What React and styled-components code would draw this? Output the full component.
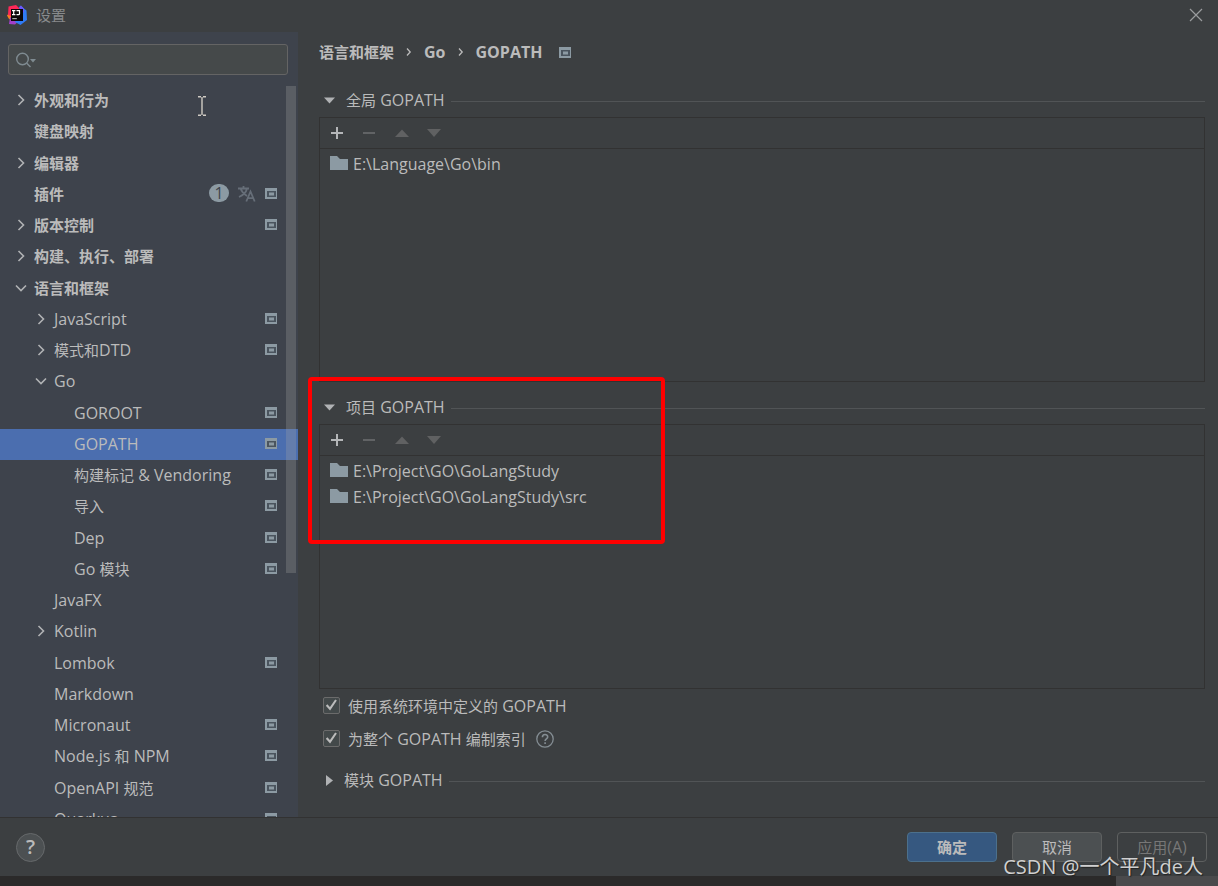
import React, { useState } from "react";
import styled, { createGlobalStyle, css } from "styled-components";

const fundo = "#3c3f41";
const fundoLateral = "#3e434c";
const texto = "#bbbbbb";
const icone = "#8c9aa3";
const borda = "#323232";
const azul = "#4b6eaf";

const GlobalStyle = createGlobalStyle`
	* {
		box-sizing: border-box;
	}

	body {
		margin: 0;
		background: ${fundo};
		color: ${texto};
		font-family: "Open Sans", "Noto Sans CJK SC", sans-serif;
		font-size: 16px;
		line-height: 20px;
	}

	button, input {
		font: inherit;
		color: inherit;
	}
`;

const Window = styled.div`
	position: relative;
	display: flex;
	flex-direction: column;
	height: 100vh;
	min-height: 600px;
	overflow: hidden;
`;

const TitleBar = styled.header`
	display: flex;
	align-items: center;
	height: 32px;
	padding: 0 15px 2px 7px;
	gap: 9px;
	color: #888a8c;
	flex-shrink: 0;
`;

const Title = styled.h1`
	flex: 1;
	margin: 0;
	font-size: 15px;
	font-weight: 400;
`;

const PlainButton = styled.button`
	display: flex;
	align-items: center;
	justify-content: center;
	padding: 0;
	border: 0;
	background: none;
`;

const Body = styled.div`
	display: flex;
	flex: 1;
	min-height: 0;
`;

const Sidebar = styled.aside`
	position: relative;
	display: flex;
	flex-direction: column;
	width: 298px;
	flex-shrink: 0;
	padding-top: 12px;
	background: ${fundoLateral};
`;

const SearchBox = styled.label`
	display: flex;
	align-items: center;
	height: 31px;
	margin: 0 10px 10px 8px;
	padding: 0 7px;
	background: #45494a;
	border: 1px solid #646464;
	border-radius: 3px;
`;

const SearchInput = styled.input`
	flex: 1;
	min-width: 0;
	border: 0;
	outline: 0;
	background: none;
`;

const TreeView = styled.div`
	position: relative;
	flex: 1;
	min-height: 0;
	overflow: hidden;
`;

const Tree = styled.ul`
	display: grid;
	grid-auto-rows: 1fr;
	height: 750px;
	margin: 0;
	padding: 0;
	list-style: none;
`;

const TreeRow = styled.li`
	display: flex;
	align-items: center;
	gap: 6px;
	padding: 0 21px 1px ${({ $level }) => 14 + $level * 20}px;
	font-weight: ${({ $level }) => ($level === 0 ? 700 : 400)};
	${({ $selected }) => $selected && css`
		background: ${azul};
	`}
`;

const TreeLabel = styled.span`
	flex: 1;
	white-space: nowrap;
`;

const Arrow = styled.span`
	display: flex;
	width: 14px;
`;

const Badge = styled.span`
	width: 20px;
	height: 18px;
	border-radius: 9px;
	background: ${icone};
	color: ${fundoLateral};
	font-weight: 400;
	line-height: 18px;
	text-align: center;
`;

const RowIcons = styled.span`
	display: flex;
	align-items: center;
	gap: 9px;
	padding-bottom: 1px;
`;

const ScrollThumb = styled.div`
	position: absolute;
	top: 1px;
	right: 2px;
	width: 10px;
	height: 67%;
	max-height: 487px;
	background: rgba(166, 166, 166, 0.28);
`;

const IBeam = styled.svg`
	position: absolute;
	left: 197px;
	top: 64px;
`;

const Content = styled.main`
	display: flex;
	flex-direction: column;
	flex: 1;
	min-width: 0;
	padding: 0 13px 20px 21px;
`;

const Breadcrumb = styled.nav`
	display: flex;
	align-items: center;
	height: 41px;
	margin-bottom: 10px;
	padding-bottom: 1px;
	font-weight: 700;
`;

const Crumb = styled.a`
	color: inherit;
	text-decoration: none;
`;

const Separator = styled.svg`
	margin: 0 12px;
`;

const CrumbIcon = styled.span`
	display: flex;
	margin-left: 17px;
`;

const Section = styled.section`
	position: relative;
	display: flex;
	flex-direction: column;
	flex: ${({ $open }) => ($open ? "1 1 0" : "none")};
	margin-top: ${({ $first }) => ($first ? 0 : 8)}px;
`;

const SectionTitle = styled.button`
	display: flex;
	align-items: center;
	gap: 6px;
	width: 100%;
	height: 34px;
	padding: 0;
	border: 0;
	background: none;
	white-space: nowrap;

	&::after {
		content: "";
		flex: 1;
		height: 1px;
		margin-top: 2px;
		background: #515456;
	}
`;

const Triangle = styled.svg`
	margin-left: 5px;
	margin-right: ${({ $open }) => ($open ? 5 : 3)}px;
`;

const Panel = styled.div`
	flex: 1;
	border: 1px solid ${borda};
`;

const Toolbar = styled.div`
	display: flex;
	gap: 16px;
	height: 31px;
	padding-left: 9px;
	border-bottom: 1px solid ${borda};
`;

const PathList = styled.ul`
	margin: 0;
	padding: 2px 0 0 10px;
	list-style: none;
`;

const PathItem = styled.li`
	display: flex;
	align-items: center;
	gap: 5px;
	height: 26px;
`;

const Highlight = styled.div`
	position: absolute;
	left: -11px;
	top: -13px;
	width: 357px;
	height: 167px;
	border: 4px solid #ff0000;
	border-radius: 4px;
	pointer-events: none;
`;

const CheckRow = styled.div`
	display: flex;
	align-items: center;
	gap: 10px;
	height: 33px;
	padding-left: 4px;
`;

const CheckLabel = styled.label`
	display: flex;
	align-items: center;
	gap: 8px;
`;

const Checkbox = styled.input`
	appearance: none;
	width: 17px;
	height: 17px;
	margin: 0;
	border: 1px solid #6b6b6b;
	border-radius: 2px;
	background: #43494a;

	&:checked {
		background: #43494a url('data:image/svg+xml,<svg xmlns="http://www.w3.org/2000/svg" viewBox="0 0 15 15"><path d="M2.6 7l3.4 3.8 6-8.8" fill="none" stroke="%23bbbbbb" stroke-width="2.1"/></svg>');
	}
`;

const Footer = styled.footer`
	display: flex;
	align-items: center;
	gap: 15px;
	height: 59px;
	padding: 0 11px 0 16px;
	border-top: 1px solid ${borda};
	flex-shrink: 0;
`;

const HelpButton = styled.button`
	width: 29px;
	height: 29px;
	margin-right: auto;
	padding: 0;
	border: 1px solid #66696b;
	border-radius: 50%;
	background: #4c5052;
	font-size: 20px;
	font-weight: 600;
`;

const Button = styled.button`
	width: 90px;
	height: 30px;
	padding: 0;
	border: 1px solid #5e6060;
	border-radius: 4px;
	background: #4c5052;

	${({ $primary }) => $primary && css`
		border-color: #4c708c;
		background: #365880;
		font-weight: 700;
	`}

	&:disabled {
		background: none;
		color: #777777;
	}
`;

const Taskbar = styled.div`
	display: flex;
	justify-content: flex-end;
	height: 10px;
	background: #2b2a2a;
	flex-shrink: 0;
`;

const TaskbarEnd = styled.div`
	width: 102px;
	background: #4a4a4c;
`;

const Watermark = styled.div`
	position: absolute;
	right: 15px;
	bottom: 7px;
	color: #d0d0d0;
	font-size: 20px;
	line-height: 24px;
	text-shadow: 1px 1px 1px #222222;
	white-space: nowrap;
`;

const Han = styled.span`
	font-size: 15px;
`;

const tree = [
	{ title: "外观和行为", level: 0, arrow: "right" },
	{ title: "键盘映射", level: 0 },
	{ title: "编辑器", level: 0, arrow: "right" },
	{ title: "插件", level: 0, updates: 1, project: true },
	{ title: "版本控制", level: 0, arrow: "right", project: true },
	{ title: "构建、执行、部署", level: 0, arrow: "right" },
	{ title: "语言和框架", level: 0, arrow: "down" },
	{ title: "JavaScript", level: 1, arrow: "right", project: true },
	{ title: "模式和DTD", level: 1, arrow: "right", project: true },
	{ title: "Go", level: 1, arrow: "down" },
	{ title: "GOROOT", level: 2, project: true },
	{ title: "GOPATH", level: 2, project: true },
	{ title: "构建标记 & Vendoring", level: 2, project: true },
	{ title: "导入", level: 2, project: true },
	{ title: "Dep", level: 2, project: true },
	{ title: "Go 模块", level: 2, project: true },
	{ title: "JavaFX", level: 1 },
	{ title: "Kotlin", level: 1, arrow: "right" },
	{ title: "Lombok", level: 1, project: true },
	{ title: "Markdown", level: 1 },
	{ title: "Micronaut", level: 1, project: true },
	{ title: "Node.js 和 NPM", level: 1, project: true },
	{ title: "OpenAPI 规范", level: 1, project: true },
	{ title: "Quarkus", level: 1, project: true },
];

// Chinese runs are set one size smaller than the latin ones
const Label = ({ text }) => (
	<span>
		{text.split(/([\u3000-\u9fff]+)/).map((part, i) => (
			i % 2 ? <Han key={i}>{part}</Han> : part
		))}
	</span>
);

const ProjectIcon = () => (
	<svg width="12" height="11" viewBox="0 0 12 11">
		<path fill={icone} d="M0 0h12v11H0z" />
		<path fill="#4a545e" fillRule="evenodd" d="M2 3h9v6H2zM4 4.6v3h5v-3z" />
	</svg>
);

const ArrowIcon = ({ dir }) => (
	<svg width="14" height="14" viewBox="0 0 14 14" fill="none" stroke="#b0b2b4" strokeWidth="1.6">
		<path d={dir === "down" ? "M2 4.5l5 5 5-5" : "M4.5 2l5 5-5 5"} />
	</svg>
);

const TranslateIcon = () => (
	<svg width="18" height="17" viewBox="0 0 18 17" fill="none" stroke="#666e78" strokeWidth="1.8">
		<path d="M0 3.5h11M5.5 1v2.5M9 3.5C8 8 4.5 10.5 1 12M2.5 3.5C4 7.5 6.5 9.5 9 11M8.3 16.5l4.2-10 4.2 10M9.8 13.2h5.4" />
	</svg>
);

const LogoIcon = () => (
	<svg width="20" height="20" viewBox="0 0 20 20">
		<path fill="#fc801d" d="M0 10.5L3 7l3 8-4-1z" />
		<path fill="#fe2857" d="M1.5 1.5L9 0l4 4-6 8-6-2z" />
		<path fill="#a33fc8" d="M3 12l9 4-4 3.5-6-.5z" />
		<path fill="#2f7bf6" d="M13 .5l6.5 5L20 15l-6.5 5L8 17l4-12z" />
		<path fill="#6b57ff" d="M12 2.5l2-2 3 3V8z" />
		<path fill="#0b0608" d="M4 4h12v12H4z" />
		<path fill="none" stroke="#fff" strokeWidth="1.2" d="M5 5.6h3.4M6.7 5.6v4M5 9.6h3.4M9.5 5.6h3v3.2q0 .9-.9.9H9.5" />
		<path fill="#aaa" d="M5.3 13h4.5v1.2H5.3z" />
	</svg>
);

const ToolbarIcons = () => (
	<Toolbar>
		<PlainButton type="button" aria-label="添加">
			<svg width="16" height="16" viewBox="0 0 16 16">
				<path fill="#b4b6b8" d="M7 2h2v5h5v2H9v5H7V9H2V7h5z" />
			</svg>
		</PlainButton>
		<PlainButton type="button" aria-label="删除" disabled>
			<svg width="16" height="16" viewBox="0 0 16 16">
				<path fill="#616365" d="M2 7h12v2H2z" />
			</svg>
		</PlainButton>
		<PlainButton type="button" aria-label="上移" disabled>
			<svg width="16" height="16" viewBox="0 0 16 16">
				<path fill="#606162" d="M2 12l7-7.5 7 7.5z" />
			</svg>
		</PlainButton>
		<PlainButton type="button" aria-label="下移" disabled>
			<svg width="16" height="16" viewBox="0 0 16 16">
				<path fill="#606162" d="M2 4h14l-7 8z" />
			</svg>
		</PlainButton>
	</Toolbar>
);

const FolderIcon = () => (
	<svg width="18" height="19" viewBox="0 0 18 19">
		<path fill={icone} d="M0 1h7l3 3h8v11H0z" />
	</svg>
);

const PathSection = ({ title, paths, first, marked }) => {
	const [open, setOpen] = useState(Boolean(paths));

	return (
		<Section $open={open && paths} $first={first}>
			<SectionTitle type="button" aria-expanded={open} onClick={() => setOpen(!open)}>
				<Triangle $open={open} width="11" height="11" viewBox="0 0 11 11">
					<path fill="#b0b2b4" d={open ? "M0 2.5h11L5.5 8.5z" : "M2 0l7 5.5L2 11z"} />
				</Triangle>
				<Label text={title} />
			</SectionTitle>
			{open && paths && (
				<Panel>
					<ToolbarIcons />
					<PathList>
						{paths.map((path) => (
							<PathItem key={path}>
								<FolderIcon />
								{path}
							</PathItem>
						))}
					</PathList>
				</Panel>
			)}
			{marked && <Highlight />}
		</Section>
	);
};

const CrumbSeparator = () => (
	<Separator width="6" height="10" viewBox="0 0 6 10" fill="none" stroke={texto} strokeWidth="1.3">
		<path d="M1 1.5L4.2 5 1 8.5" />
	</Separator>
);

const App = () => {
	const [selected, setSelected] = useState("GOPATH");

	return (
		<Window>
			<GlobalStyle />
			<TitleBar>
				<LogoIcon />
				<Title>设置</Title>
				<PlainButton type="button" aria-label="关闭">
					<svg width="14" height="14" viewBox="0 0 14 14" stroke="#9a9c9e" strokeWidth="1.2">
						<path d="M1 1l12 12M13 1L1 13" />
					</svg>
				</PlainButton>
			</TitleBar>

			<Body>
				<Sidebar>
					<SearchBox>
						<svg width="20" height="18" viewBox="0 0 20 18" fill="none" stroke="#7f8b91" strokeWidth="1.4">
							<circle cx="6.5" cy="8" r="5.8" />
							<path d="M10.8 12.2l3.7 3.8" />
							<path fill="#7f8b91" stroke="none" d="M14 8h6l-3 3.5z" />
						</svg>
						<SearchInput type="text" aria-label="搜索" />
					</SearchBox>
					<TreeView>
						<Tree>
							{tree.map(({ title, level, arrow, updates, project }) => (
								<TreeRow
									key={title}
									$level={level}
									$selected={title === selected}
									onClick={() => setSelected(title)}
								>
									<Arrow>{arrow && <ArrowIcon dir={arrow} />}</Arrow>
									<TreeLabel><Label text={title} /></TreeLabel>
									<RowIcons>
										{updates && <Badge>{updates}</Badge>}
										{updates && <TranslateIcon />}
										{project && <ProjectIcon />}
									</RowIcons>
								</TreeRow>
							))}
						</Tree>
						<ScrollThumb />
					</TreeView>
					<IBeam width="10" height="20" viewBox="0 0 10 20" fill="none" stroke="#d0ccc4" strokeWidth="1.4">
						<path d="M1 .7h3M6 .7h3M5 1v18M1 19.3h3M6 19.3h3" />
					</IBeam>
				</Sidebar>

				<Content>
					<Breadcrumb>
						<Crumb href="#languages"><Label text="语言和框架" /></Crumb>
						<CrumbSeparator />
						<Crumb href="#go">Go</Crumb>
						<CrumbSeparator />
						<Crumb href="#gopath">GOPATH</Crumb>
						<CrumbIcon>
							<ProjectIcon />
						</CrumbIcon>
					</Breadcrumb>

					<PathSection title="全局 GOPATH" paths={["E:\\Language\\Go\\bin"]} first />
					<PathSection
						title="项目 GOPATH"
						paths={["E:\\Project\\GO\\GoLangStudy", "E:\\Project\\GO\\GoLangStudy\\src"]}
						marked
					/>

					<CheckRow>
						<CheckLabel>
							<Checkbox type="checkbox" defaultChecked />
							<Label text="使用系统环境中定义的 GOPATH" />
						</CheckLabel>
					</CheckRow>
					<CheckRow>
						<CheckLabel>
							<Checkbox type="checkbox" defaultChecked />
							<Label text="为整个 GOPATH 编制索引" />
						</CheckLabel>
						<svg width="18" height="18" viewBox="0 0 18 18" fill="none" stroke="#848d93" strokeWidth="1.3">
							<circle cx="9" cy="9" r="8.2" />
							<path strokeWidth="1.6" d="M6.4 7.2c0-3.6 5.3-3.4 5.3-.3 0 1.9-2.6 2-2.6 4M9.1 12.2v1.7" />
						</svg>
					</CheckRow>

					<PathSection title="模块 GOPATH" />
				</Content>
			</Body>

			<Footer>
				<HelpButton type="button" aria-label="帮助">?</HelpButton>
				<Button type="button" $primary><Label text="确定" /></Button>
				<Button type="button"><Label text="取消" /></Button>
				<Button type="button" disabled><Label text="应用(A)" /></Button>
			</Footer>
			<Taskbar>
				<TaskbarEnd />
			</Taskbar>
			<Watermark>CSDN @一个平凡de人</Watermark>
		</Window>
	);
};

export default App;
